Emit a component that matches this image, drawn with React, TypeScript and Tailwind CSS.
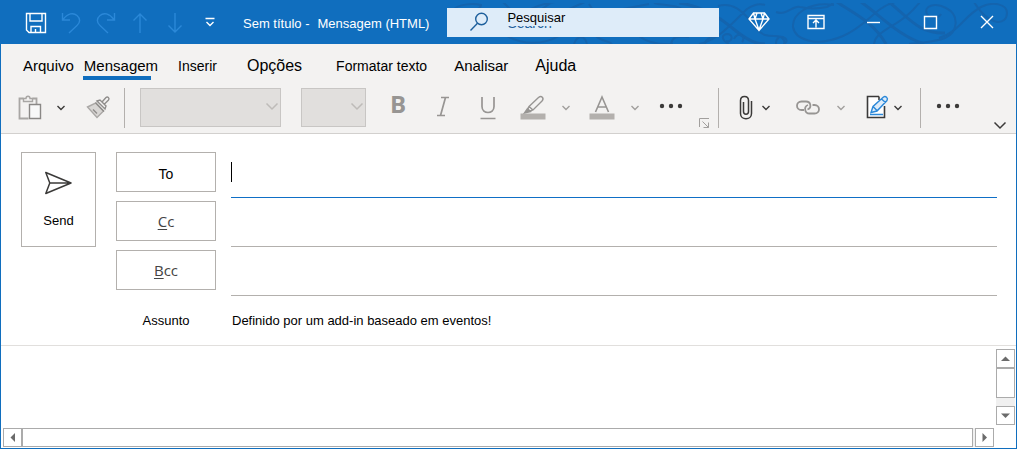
import type { ReactNode } from "react";

type IconProps = { className?: string };

function Chevron({ className = "text-[#3b3a39]", big = false }: IconProps & { big?: boolean }) {
  return big ? (
    <svg className={className} width="16" height="16" viewBox="0 0 16 16" fill="none" stroke="currentColor" strokeWidth="1.5">
      <path d="M2.500 5.500 8 11l5.500-5.500" />
    </svg>
  ) : (
    <svg className={className} width="16" height="16" viewBox="0 0 16 16" fill="none" stroke="currentColor" strokeWidth="1.4">
      <path d="M4.500 6 8 9.500 11.500 6" />
    </svg>
  );
}

function Dots() {
  return (
    <svg width="24" height="24" viewBox="0 0 24 24" fill="#3b3a39" className="mb-1">
      <circle cx="3" cy="12" r="2.200" />
      <circle cx="12" cy="12" r="2.200" />
      <circle cx="21" cy="12" r="2.200" />
    </svg>
  );
}

function Swirls() {
  return (
    <svg
      className="absolute right-0 top-[3px] h-[41px] w-[567px]"
      viewBox="450 3 567 41"
      fill="none"
      stroke="#1464ae"
      strokeWidth="2"
      aria-hidden="true"
    >
      <path d="M455 9C461 4 474 3 482 5c0 2-3 4-6 5M504 2l8 8M532 9c8-4 16-6 24-7M553 2l-10 7M586 2l-18 8M590 4l4 6M650 4l-26 5M655 3c10 3 20 1 28 6" />
      <path d="M508 36c16 9 36 9 52 0M575 44c3-9 11-9 13 0M597 36c6 6 12 4 16 8M672 44c2-10 10-7 18-7M706 44c0-4 5-8 12-8M640 36c9 7 20 9 34 8" />
      <path d="M680 3c16 2 34 9 52 24s26 17 34 17" strokeWidth="3" />
      <path d="M700 44c20-4 34-22 48-35 6-4 12-6 18-4M719 6c14-4 24 3 38 22 12 16 26 0 29 16M730 44c-8-4-8-10-1-10 6 1 4 9-2 7M735 39c3-8 13-3 8 3" />
      <path d="M835 5c-26-4-42 10-41 22 2 12 22 21 50 9 25-11 31-28 52-34M777 12c10 4 17-7 24-5 9 2 17 2 27 0 6-2 6-6 8-5" />
      <path d="M940 38c20-6 25-22 42-31 12-6 26-3 26 6 0 12-17 15-33-11" />
      <path d="M838 2c14 10 36 19 49 42M890 2c20 16 30 32 56 31" strokeWidth="3" />
      <path d="M862 2c20 14 38 34 63 42" strokeWidth="3" />
      <path d="M928 14c-4-8 8-12 19-6 14 7 12 24-1 30-10 4-24 5-36 6M928 14c4 5 12 4 14 0M875 44c1-8 7-11 16-17 18-10 24-18 30-25" />
      <path d="M777 44c0-6 4-9 9-6 3 2 1 6-2 6" />
    </svg>
  );
}

const titleIcons: { label: string; className: string; icon: ReactNode }[] = [
  {
    label: "Salvar",
    className: "ml-[23px]",
    icon: (
      <g stroke="#fff">
        <path d="M2.500 3.500h19v19H5L2.500 20zM6 4v7h12V4M7 22.500v-6h9.500v6M11.500 19v3" strokeWidth="1.4" />
      </g>
    ),
  },
  {
    label: "Desfazer",
    className: "ml-[11px]",
    icon: <path d="M3.500 3v7h7.500M4 9.500C9 3 14.500 2.500 18 5.500s3.500 7 0 10L10 23" />,
  },
  {
    label: "Refazer",
    className: "ml-[11px]",
    icon: <path d="M20.500 3v7H13M20 9.500C15 3 9.500 2.500 6 5.500s-3.500 7 0 10l8 7.500" />,
  },
  { label: "Item anterior", className: "ml-[10px]", icon: <path d="M12 23V4M5.500 10.500 12 4l6.500 6.500" /> },
  { label: "Próximo item", className: "ml-[11px]", icon: <path d="M12 3v19M5.500 15.500 12 22l6.500-6.500" /> },
  {
    label: "Personalizar",
    className: "ml-[11px]",
    icon: <path d="M7.500 8.500h9M8.500 12 12 15.500l3.500-3.500" stroke="#fff" />,
  },
];

const windowIcons: { label: string; icon: ReactNode }[] = [
  {
    label: "Premium",
    icon: (
      <path d="M6.500 3h11L22 9l-10 11.500L2 9zM2 9h20M8 9l4 11 4-11-2-6M10 3 8 9M6.500 3 8 9M17.500 3 16 9" />
    ),
  },
  {
    label: "Opções da faixa",
    icon: <path d="M4 5.500h16v13H4zM4 8.500h16M12 17.500v-7M9 13l3-3 3 3" />,
  },
  { label: "Minimizar", icon: <path d="M6 12.500h13" /> },
  { label: "Maximizar", icon: <path d="M6.500 6.500h12v12h-12z" /> },
  { label: "Fechar", icon: <path d="m6 6 12 12M18 6 6 18" /> },
];

const tabs = [
  { label: "Arquivo", className: "ml-[22px] text-[15px]" },
  { label: "Mensagem", className: "ml-[10px] text-[15px]", active: true },
  { label: "Inserir", className: "ml-5 text-[14px]" },
  { label: "Opções", className: "ml-[30px] text-[16px]" },
  { label: "Formatar texto", className: "ml-[34px] text-[14px]" },
  { label: "Analisar", className: "ml-[27px] text-[15px]" },
  { label: "Ajuda", className: "ml-[27px] text-[16px]" },
];

function Tool({ label, className = "", children }: { label: string; className?: string; children: ReactNode }) {
  return (
    <button type="button" aria-label={label} className={`flex h-6 shrink-0 items-center justify-center ${className}`}>
      {children}
    </button>
  );
}

function Glyph({ children, color = "#979593" }: { children: ReactNode; color?: string }) {
  return (
    <svg width="26" height="26" viewBox="0 0 26 26" fill="none" stroke={color} strokeWidth="1.4" className="mb-[2px] shrink-0">
      {children}
    </svg>
  );
}

function Separator({ className }: { className: string }) {
  return <div className={`h-10 w-px shrink-0 bg-[#b3b0ad] ${className}`} />;
}

function Combo({ label, className }: { label: string; className: string }) {
  return (
    <div className={`relative h-[39px] shrink-0 ${className}`}>
      <select
        aria-label={label}
        disabled
        className="h-full w-full appearance-none border border-[#c8c6c4] bg-[#e1dfdd] opacity-100"
      >
        <option value=""></option>
      </select>
      <Chevron big className="pointer-events-none absolute right-px top-[10px] text-[#bebbb8]" />
    </div>
  );
}

const recipients = [
  { id: "to", label: "To", button: "pt-1 font-['Liberation_Sans'] text-[14px] text-black", line: "border-[#0f6fc6]" },
  { id: "cc", label: "Cc", button: "font-['Open_Sans'] text-[15px] text-[#444]", line: "border-[#b3b0ad]" },
  { id: "bcc", label: "Bcc", button: "font-['Open_Sans'] text-[15px] text-[#444]", line: "border-[#b3b0ad]" },
];

function ScrollButton({ label, path, className = "" }: { label: string; path: string; className?: string }) {
  return (
    <button
      type="button"
      aria-label={label}
      className={`flex h-[19px] w-[19px] shrink-0 items-center justify-center border border-[#ababab] bg-white ${className}`}
    >
      <svg width="11" height="11" viewBox="0 0 11 11" fill="#6b6b6b">
        <path d={path} />
      </svg>
    </button>
  );
}

export default function App() {
  return (
    <div className="flex min-h-screen flex-col border-x border-b border-[#106ebe] bg-white font-['Liberation_Sans',Arial,sans-serif] text-[13px] text-black">
      <header className="relative flex h-11 items-center bg-[#106ebe] text-white">
        <Swirls />
        {titleIcons.map((item) => (
          <button key={item.label} type="button" aria-label={item.label} className={`shrink-0 ${item.className}`}>
            <svg width="24" height="24" viewBox="0 0 24 24" fill="none" stroke="#2b88d8" strokeWidth="1.4">
              {item.icon}
            </svg>
          </button>
        ))}
        <h1 className="ml-[21px] flex shrink-0 gap-2 whitespace-nowrap pt-1">
          <span>Sem título -</span>
          <span>Mensagem (HTML)</span>
        </h1>
        <div className="relative ml-[18px] flex h-[29px] w-[272px] bg-[#deecf9]">
          <svg className="ml-[22px] mt-1 shrink-0" width="20" height="20" viewBox="0 0 20 20" fill="none" stroke="#1d5f9c" strokeWidth="1.4">
            <circle cx="12.500" cy="7" r="5.800" />
            <path d="M8.500 11.300 1.500 18.500" />
          </svg>
          <div className="ml-[18px] flex min-w-0 flex-1 flex-col">
            <input
              id="search"
              type="search"
              placeholder="Pesquisar"
              className="relative z-10 mt-[2px] h-4 w-full bg-[#deecf9] text-[13px] leading-4 text-black outline-none placeholder:text-black placeholder:opacity-100"
            />
            <label htmlFor="search" className="-mt-[11px] text-[14px] leading-4 text-[#1d5f9c]">
              Search
            </label>
          </div>
        </div>
        <div className="relative ml-auto mr-[17px] flex shrink-0 gap-[33px]">
          {windowIcons.map((item) => (
            <button key={item.label} type="button" aria-label={item.label}>
              <svg width="24" height="24" viewBox="0 0 24 24" fill="none" stroke="#fff" strokeWidth="1.4">
                {item.icon}
              </svg>
            </button>
          ))}
        </div>
      </header>

      <section className="border-b border-[#d2d0ce] bg-[#f3f2f1]">
        <nav className="flex h-11 items-center">
          {tabs.map((tab) => (
            <button key={tab.label} type="button" className={`relative shrink-0 whitespace-nowrap leading-5 ${tab.className}`}>
              {tab.label}
              {tab.active && <span className="absolute -bottom-1 -left-px h-1 w-[68px] bg-[#106ebe]" />}
            </button>
          ))}
        </nav>
        <div className="flex h-[45px] items-start pl-[17px]">
          <div className="flex h-[39px] flex-1 items-center">
            <Tool label="Colar" className="w-6">
              <Glyph color="#a8a6a4">
                <path d="M6.500 4.500h-4v20h9M15.500 4.500h4V10" strokeWidth="1.800" />
                <path d="M6.500 7.500V4.500h2.500c0-3 4-3 4 0h2.500v3z" />
                <path d="M12.500 10.500h11v14h-11z" fill="#f8f8f8" stroke="#8a8886" />
              </Glyph>
            </Tool>
            <Tool label="Opções de colagem" className="ml-[11px] w-4"><Chevron /></Tool>
            <Tool label="Pincel de formatação" className="ml-[17px] w-6">
              <Glyph color="#8f8d8b">
                <path d="m2.500 13 8-4 8 8-6.500 6.500z" fill="#d8d6d4" stroke="#aaa8a6" />
                <path d="m10.500 8.500 8.500 9M12 7l3-1 6 6-1 3zM17 8l4-4.500c1.500-1.500 4 .5 2.500 2.500L19.500 10M8 15.500l4 4" />
              </Glyph>
            </Tool>
            <Separator className="ml-[14px]" />
            <Combo label="Fonte" className="ml-[15px] w-[141px]" />
            <Combo label="Tamanho da fonte" className="ml-5 w-[65px]" />
            <Tool label="Negrito" className="ml-5 w-6">
              <span className="pb-2 font-['Open_Sans'] text-[24px] font-bold leading-6 text-[#979593]">B</span>
            </Tool>
            <Tool label="Itálico" className="ml-[21px] w-6">
              <Glyph><path d="M11 3.500h8M7 21.500h8M15.500 3.500 10.500 21.500" strokeWidth="1.700" /></Glyph>
            </Tool>
            <Tool label="Sublinhado" className="ml-[21px] w-6">
              <Glyph><path d="M7 3v9.500c0 8 12 8 12 0V3M5.500 24.500h15" strokeWidth="1.700" /></Glyph>
            </Tool>
            <Tool label="Realce" className="ml-[21px] w-6">
              <Glyph>
                <path d="M.5 19.500h25v6H.5z" fill="#b3b0ad" stroke="none" />
                <path d="m9 12.500 9.500-9c3-2.500 6 .5 3.500 3.500L13 16l-4 1.500-1.500-1.500zM9 12.500l4 3.500" />
                <path d="m7.500 14.500 3 3-6 1.500z" fill="#979593" />
              </Glyph>
            </Tool>
            <Tool label="Cores de realce" className="ml-[13px] w-4"><Chevron className="text-[#a19f9d]" /></Tool>
            <Tool label="Cor da fonte" className="ml-4 w-6">
              <Glyph>
                <path d="M.5 19.500h25v6H.5z" fill="#b3b0ad" stroke="none" />
                <path d="M6.500 18 13 3l6.500 15M8.500 13h9" strokeWidth="1.600" />
              </Glyph>
            </Tool>
            <Tool label="Cores da fonte" className="ml-[13px] w-4"><Chevron className="text-[#a19f9d]" /></Tool>
            <Tool label="Mais formatação" className="ml-4 w-6"><Dots /></Tool>
            <Tool label="Configurações de fonte" className="ml-[15px] w-3 self-end">
              <svg width="12" height="12" viewBox="0 0 12 12" fill="none" stroke="#a19f9d" className="mt-4 shrink-0">
                <path d="M1.500 10V1.500H11M4.500 4.500l6 6M10.500 5.500v5h-5" />
              </svg>
            </Tool>
            <Separator className="ml-2" />
            <Tool label="Anexar" className="ml-[15px] w-6">
              <Glyph color="#3b3a39">
                <path d="M10.500 8v9.500c0 3.500 5 3.500 5 0V6.500c0-5.500-8-5.500-8 0v13c0 7 11 7 11 0V7" strokeWidth="1.500" />
              </Glyph>
            </Tool>
            <Tool label="Opções de anexo" className="w-4"><Chevron /></Tool>
            <Tool label="Link" className="ml-[22px] w-6">
              <Glyph>
                <path d="M9 16H6.500C.5 16 .5 7.500 6.500 7.500h4.500c5 0 6 6.500 1.500 8M17.500 11h2c6 0 6 8.500 0 8.500h-5c-5 0-6-7-1.500-8.500" strokeWidth="1.800" />
              </Glyph>
            </Tool>
            <Tool label="Opções de link" className="ml-[13px] w-4"><Chevron className="text-[#a19f9d]" /></Tool>
            <Tool label="Assinatura" className="ml-[17px] w-6">
              <Glyph color="#3b3a39">
                <path d="M14 2.500H2.500v21h17V12M14 2.500V6" fill="#fff" strokeWidth="1.600" />
                <path d="m6 18.500 2-6L18.500 3c2-1.500 5 1 3.500 3.500L12 17zM8 12.500l4 4M16.500 5l4 3.500M5 20.500h13" fill="#deecf9" stroke="#2b88d8" />
              </Glyph>
            </Tool>
            <Tool label="Opções de assinatura" className="w-4"><Chevron /></Tool>
            <Separator className="ml-[14px]" />
            <Tool label="Mais comandos" className="ml-[15px] w-6"><Dots /></Tool>
          </div>
          <button type="button" aria-label="Recolher a faixa" className="mr-2 shrink-0 self-end">
            <Chevron big />
          </button>
        </div>
      </section>

      <form className="flex border-b border-[#e1dfdd] pb-3 pl-5 pr-[19px] pt-[18px]">
        <button type="button" className="flex h-[95px] w-[75px] shrink-0 flex-col items-center border border-[#b3b0ad] pt-[18px]">
          <svg width="28" height="24" viewBox="0 0 28 24" fill="none" stroke="#3b3a39" strokeWidth="1.500" strokeLinejoin="round">
            <path d="M.8 1.500 26 12 .8 22.500 4.800 12zM4.800 12H26" />
          </svg>
          <span className="mt-4 leading-5">Send</span>
        </button>
        <div className="ml-5 flex-1">
          {recipients.map((field) => (
            <div key={field.id} className="flex h-[49px] gap-[15px]">
              <button type="button" className={`h-10 w-[100px] shrink-0 border border-[#b3b0ad] ${field.button}`}>
                {field.id === "to" ? (
                  field.label
                ) : (
                  <>
                    <span className="underline underline-offset-2">{field.label[0]}</span>
                    {field.label.slice(1)}
                  </>
                )}
              </button>
              <div className={`flex h-[46px] flex-1 items-center border-b pb-[5px] ${field.line}`}>
                {field.id === "to" && <span className="h-5 w-px bg-black" />}
                <input type="text" aria-label={field.label} className="h-full w-full outline-none" />
              </div>
            </div>
          ))}
          <div className="flex h-[34px] items-center gap-4 pt-[10px]">
            <label htmlFor="subject" className="w-[100px] text-center leading-5">
              Assunto
            </label>
            <input
              id="subject"
              type="text"
              defaultValue="Definido por um add-in baseado em eventos!"
              className="h-5 flex-1 leading-5 outline-none"
            />
          </div>
        </div>
      </form>

      <main className="flex flex-1 flex-col pb-px pl-[2px] pr-px pt-[3px]">
        <div className="flex flex-1">
          <textarea aria-label="Mensagem" className="flex-1 resize-none outline-none" />
          <div className="flex w-[19px] flex-col bg-[#f0f0f0]">
            <ScrollButton label="Rolar para cima" path="M1 8 5.500 3.500 10 8z" />
            <div className="h-[30px] border border-[#ababab] bg-white" />
            <ScrollButton label="Rolar para baixo" path="M1 3.500h9L5.500 8z" className="mt-auto" />
          </div>
        </div>
        <div className="mr-[21px] mt-[3px] flex bg-[#f0f0f0]">
          <ScrollButton label="Rolar para a esquerda" path="M8 1v9L3.500 5.500z" />
          <div className="mr-[2px] flex-1 border border-[#ababab] bg-white" />
          <ScrollButton label="Rolar para a direita" path="M3.500 1v9L8 5.500z" />
        </div>
      </main>
    </div>
  );
}
